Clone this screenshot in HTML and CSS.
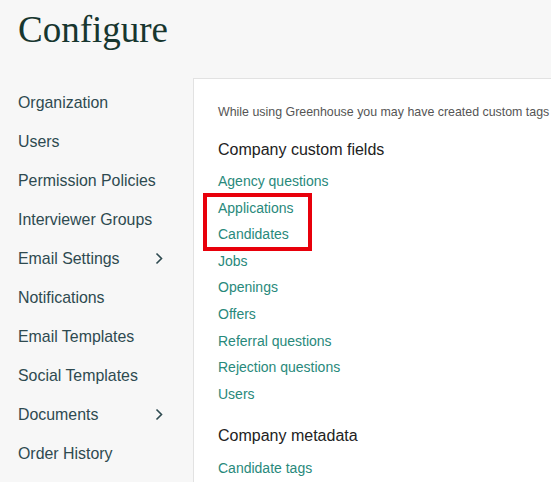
FILE: index.html
```html
<!DOCTYPE html>
<html>
<head>
<meta charset="utf-8">
<link rel="stylesheet" href="styles.css">
</head>
<body>
<header class="top">
  <h1 class="title">Configure</h1>
</header>
<div class="main">
  <nav class="side">
    <a class="nav-item">Organization</a>
    <a class="nav-item">Users</a>
    <a class="nav-item">Permission Policies</a>
    <a class="nav-item">Interviewer Groups</a>
    <a class="nav-item">Email Settings <svg class="chev" width="8" height="13" viewBox="0 0 8 13"><path d="M1.5 1.5 L6.5 6.5 L1.5 11.5" fill="none" stroke="#2e4a50" stroke-width="1.6"/></svg></a>
    <a class="nav-item">Notifications</a>
    <a class="nav-item">Email Templates</a>
    <a class="nav-item">Social Templates</a>
    <a class="nav-item">Documents <svg class="chev" width="8" height="13" viewBox="0 0 8 13"><path d="M1.5 1.5 L6.5 6.5 L1.5 11.5" fill="none" stroke="#2e4a50" stroke-width="1.6"/></svg></a>
    <a class="nav-item">Order History</a>
  </nav>
  <section class="panel">
    <p class="intro">While using Greenhouse you may have created custom tags</p>
    <h2 class="heading">Company custom fields</h2>
    <div class="links">
      <a class="link">Agency questions</a>
      <div class="highlight">
        <a class="link">Applications</a>
        <a class="link">Candidates</a>
      </div>
      <a class="link">Jobs</a>
      <a class="link">Openings</a>
      <a class="link">Offers</a>
      <a class="link">Referral questions</a>
      <a class="link">Rejection questions</a>
      <a class="link">Users</a>
    </div>
    <h2 class="heading heading-2">Company metadata</h2>
    <div class="links links-2">
      <a class="link">Candidate tags</a>
    </div>
  </section>
</div>
</body>
</html>
```
FILE: styles.css
```css
html, body {
  margin: 0;
  padding: 0;
  background: #f7f7f7;
  height: 100%;
  overflow: hidden;
}
body {
  font-family: "Liberation Sans", Arial, sans-serif;
}
.top {
  padding: 10px 18px 0;
}
.title {
  margin: 0;
  font-family: "Liberation Serif", "Times New Roman", serif;
  font-weight: normal;
  font-size: 37px;
  line-height: 40px;
  color: #17362f;
}
.main {
  display: flex;
  align-items: flex-start;
}
.side {
  width: 193px;
  flex: 0 0 193px;
  box-sizing: border-box;
  padding: 33px 30px 0 18px;
  display: flex;
  flex-direction: column;
}
.nav-item {
  display: flex;
  align-items: center;
  justify-content: space-between;
  font-size: 15.9px;
  line-height: 39px;
  height: 39px;
  color: #2e4a50;
}
.chev {
  display: block;
}
.panel {
  flex: 1;
  margin-top: 28px;
  background: #fff;
  border-top: 1px solid #e2e2e2;
  border-left: 1px solid #e2e2e2;
  padding: 0 0 0 24px;
  white-space: nowrap;
  overflow: hidden;
  height: 420px;
}
.intro {
  margin: 25px 0 0;
  font-size: 12.4px;
  line-height: 16px;
  color: #555;
}
.heading {
  margin: 20px 0 0;
  font-weight: normal;
  font-size: 16px;
  line-height: 20px;
  color: #222;
}
.heading-2 {
  margin-top: 18.6px;
}
.links {
  margin-top: 8px;
  display: flex;
  flex-direction: column;
  align-items: flex-start;
}
.links-2 {
  margin-top: 8.7px;
}
.link {
  display: block;
  font-size: 14px;
  line-height: 26.6px;
  height: 26.6px;
  color: #28897b;
}
.highlight {
  position: relative;
}
.highlight::after {
  content: "";
  position: absolute;
  left: -15px;
  top: -1.6px;
  width: 101px;
  height: 50px;
  border: 4px solid #e8000b;
}
```
